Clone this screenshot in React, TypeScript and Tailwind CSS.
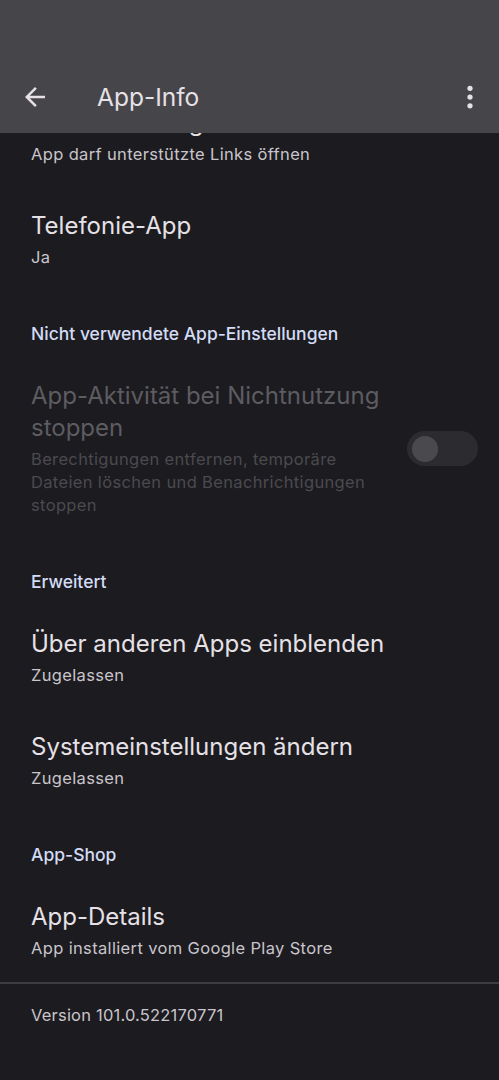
import React from "react";

const font = { fontFamily: "Inter, Roboto, 'Noto Sans', sans-serif" };

function Item({ title, sub }: { title: string; sub: string }) {
  return (
    <div className="px-[31px] py-[22px]">
      <div className="text-[24px] leading-[32px] text-[#e6e1e6]">{title}</div>
      <div className="mt-[4px] text-[16.5px] leading-[23px] tracking-[0.35px] text-[#c9c5cb]">{sub}</div>
    </div>
  );
}

function Section({ label }: { label: string }) {
  return (
    <div className="px-[31px] pt-[32px] pb-[13px] text-[17.5px] leading-[22px] font-medium text-[#d3dcf5]">
      {label}
    </div>
  );
}

export default function App() {
  return (
    <div className="w-[499px] h-[1080px] bg-[#1c1b20] flex flex-col overflow-hidden" style={font}>
      <div className="h-[133px] shrink-0 bg-[#46454a] flex flex-col justify-end">
        <div className="h-[70px] flex items-center pb-[2px]">
          <div className="w-[97px] pl-[20px] flex items-center">
            <svg width="30" height="30" viewBox="0 0 24 24">
              <path d="M20 11H7.83l5.59-5.59L12 4l-8 8 8 8 1.41-1.41L7.83 13H20v-2z" fill="#e6e1e6" />
            </svg>
          </div>
          <div className="flex-1 text-[24.5px] text-[#e6e1e6] leading-[32px]">App-Info</div>
          <div className="flex justify-end pr-[14px]">
            <svg width="30" height="30" viewBox="0 0 24 24">
              <circle cx="12" cy="5" r="2.1" fill="#e6e1e6" />
              <circle cx="12" cy="12" r="2.1" fill="#e6e1e6" />
              <circle cx="12" cy="19" r="2.1" fill="#e6e1e6" />
            </svg>
          </div>
        </div>
      </div>
      <div className="flex-1 overflow-hidden">
        <div className="-mt-[48px]">
          <Item title="Standardmäßig öffnen" sub="App darf unterstützte Links öffnen" />
          <Item title="Telefonie-App" sub="Ja" />
          <Section label="Nicht verwendete App-Einstellungen" />
          <div className="pl-[31px] pr-[21px] py-[22px] flex items-center">
            <div className="w-[355px]">
              <div className="text-[24px] leading-[32px] text-[#5d5c61]">
                App-Aktivität bei Nichtnutzung stoppen
              </div>
              <div className="mt-[4px] text-[16.5px] leading-[23px] tracking-[0.35px] text-[#4b4a4f]">
                Berechtigungen entfernen, temporäre Dateien löschen und Benachrichtigungen stoppen
              </div>
            </div>
            <div className="flex-1" />
            <div className="w-[71px] h-[35px] shrink-0 rounded-full bg-[#2c2b30] flex items-center pl-[5px]">
              <div className="w-[26px] h-[26px] rounded-full bg-[#4a494e]" />
            </div>
          </div>
          <Section label="Erweitert" />
          <Item title="Über anderen Apps einblenden" sub="Zugelassen" />
          <Item title="Systemeinstellungen ändern" sub="Zugelassen" />
          <Section label="App-Shop" />
          <Item title="App-Details" sub="App installiert vom Google Play Store" />
          <div className="h-[2px] bg-[#3e3d42]" />
          <div className="px-[31px] pt-[20px] text-[16.5px] leading-[23px] tracking-[0.2px] text-[#c9c5cb]">
            Version 101.0.522170771
          </div>
        </div>
      </div>
    </div>
  );
}
